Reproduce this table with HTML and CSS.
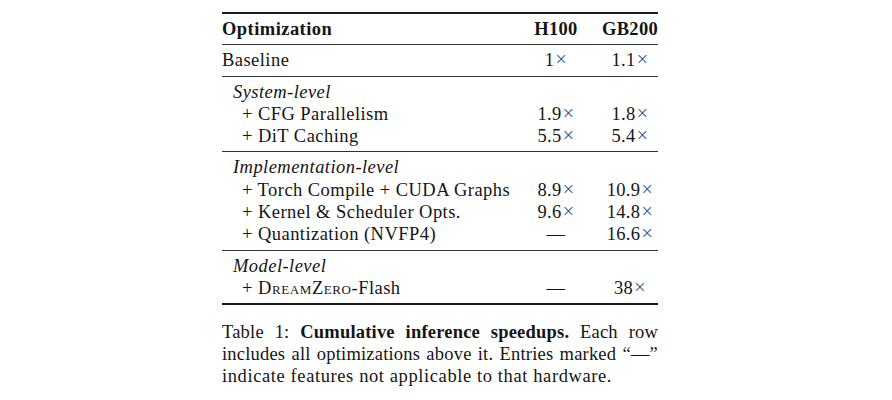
FILE: index.html
```html
<!DOCTYPE html>
<html>
<head>
<meta charset="utf-8">
<link rel="stylesheet" href="styles.css">
</head>
<body>
<div class="figure">
  <div class="tbl">
    <div class="sec head">
      <div class="row">
        <span class="c1 b">Optimization</span>
        <span class="c2 b">H100</span>
        <span class="c3 b">GB200</span>
      </div>
    </div>
    <div class="sec">
      <div class="row">
        <span class="c1">Baseline</span>
        <span class="c2">1<span class="x">×</span></span>
        <span class="c3">1.1<span class="x">×</span></span>
      </div>
    </div>
    <div class="sec">
      <div class="row"><span class="c1 grp">System-level</span></div>
      <div class="row">
        <span class="c1 item">+ CFG Parallelism</span>
        <span class="c2">1.9<span class="x">×</span></span>
        <span class="c3">1.8<span class="x">×</span></span>
      </div>
      <div class="row">
        <span class="c1 item">+ DiT Caching</span>
        <span class="c2">5.5<span class="x">×</span></span>
        <span class="c3">5.4<span class="x">×</span></span>
      </div>
    </div>
    <div class="sec">
      <div class="row"><span class="c1 grp">Implementation-level</span></div>
      <div class="row">
        <span class="c1 item">+ Torch Compile + CUDA Graphs</span>
        <span class="c2">8.9<span class="x">×</span></span>
        <span class="c3">10.9<span class="x">×</span></span>
      </div>
      <div class="row">
        <span class="c1 item">+ Kernel &amp; Scheduler Opts.</span>
        <span class="c2">9.6<span class="x">×</span></span>
        <span class="c3">14.8<span class="x">×</span></span>
      </div>
      <div class="row">
        <span class="c1 item">+ Quantization (NVFP4)</span>
        <span class="c2">—</span>
        <span class="c3">16.6<span class="x">×</span></span>
      </div>
    </div>
    <div class="sec last">
      <div class="row"><span class="c1 grp">Model-level</span></div>
      <div class="row">
        <span class="c1 item">+ <span class="sc">DreamZero</span>-Flash</span>
        <span class="c2">—</span>
        <span class="c3">38<span class="x">×</span></span>
      </div>
    </div>
  </div>
  <div class="caption">
    <span class="line just">Table 1: <b>Cumulative inference speedups.</b> Each row</span>
    <span class="line just">includes all optimizations above it. Entries marked “—”</span>
    <span class="line wide">indicate features not applicable to that hardware.</span>
  </div>
</div>
</body>
</html>
```

FILE: styles.css
```css
html, body {
  margin: 0;
  padding: 0;
  background: #ffffff;
}

body {
  font-family: "Liberation Serif", "DejaVu Serif", serif;
  font-size: 18.5px;
  color: #151515;
}

.figure {
  width: 436px;
  margin-left: 222px;
  padding-top: 12px;
}

.tbl {
  border-top: 2px solid #1a1a1a;
  border-bottom: 2px solid #1a1a1a;
}

.sec {
  padding: 4px 0;
  border-top: 1px solid #333333;
}

.sec.head {
  border-top: none;
}

.row {
  display: grid;
  grid-template-columns: 288px 52px 56px;
  column-gap: 20px;
  line-height: 22.3px;
  white-space: nowrap;
}

.c1 {
  text-align: left;
  letter-spacing: 0.45px;
}

.c2, .c3 {
  text-align: center;
  letter-spacing: 0.3px;
}

.b {
  font-weight: bold;
}

.grp {
  font-style: italic;
  padding-left: 11px;
}

.item {
  padding-left: 20px;
}

.x {
  color: #3e5f93;
  margin-left: 1px;
  font-size: 1.12em;
  line-height: 1;
}

.sc {
  font-variant: small-caps;
  letter-spacing: 0.6px;
}

.caption {
  margin-top: 16px;
  line-height: 22px;
  letter-spacing: 0.2px;
}

.line {
  display: block;
  white-space: nowrap;
}

.line.just {
  text-align: justify;
  text-align-last: justify;
  white-space: normal;
}

.line.wide {
  letter-spacing: 0.6px;
}
```
